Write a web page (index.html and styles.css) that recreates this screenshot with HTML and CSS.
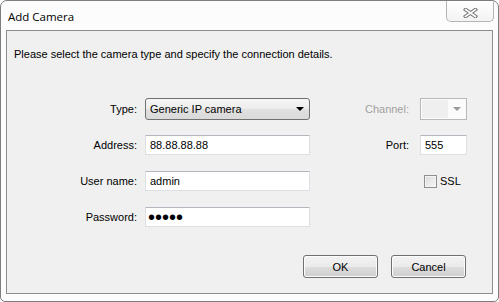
FILE: index.html
```html
<!DOCTYPE html>
<html lang="en">
<head>
  <meta charset="UTF-8" />
  <title>Add Camera</title>
  <link rel="stylesheet" href="styles.css">
</head>
<body>
  <div class="window">
    <div class="titlebar">
      <span class="title">Add Camera</span>
      <div class="close-btn">
        <svg width="15" height="10" viewBox="0 0 15 10">
          <path d="M2.5 1.5 L12.5 8.5 M12.5 1.5 L2.5 8.5" stroke="#767676" stroke-width="3.6" stroke-linecap="square" fill="none"/>
          <path d="M2.5 1.5 L12.5 8.5 M12.5 1.5 L2.5 8.5" stroke="#ffffff" stroke-width="1.6" stroke-linecap="square" fill="none"/>
        </svg>
      </div>
    </div>

    <div class="client">
      <p class="intro">Please select the camera type and specify the connection details.</p>

      <div class="form-grid">
        <label class="lbl">Type:</label>
        <div class="combo">
          <span>Generic IP camera</span>
          <span class="arrow"></span>
        </div>
        <label class="lbl lbl-right disabled">Channel:</label>
        <div class="combo-disabled">
          <span class="combo-fill"></span>
          <span class="arrow arrow-gray"></span>
        </div>

        <label class="lbl">Address:</label>
        <input class="field" type="text" value="88.88.88.88" readonly>
        <label class="lbl lbl-right">Port:</label>
        <input class="field" type="text" value="555" readonly>

        <label class="lbl">User name:</label>
        <input class="field" type="text" value="admin" readonly>
        <span></span>
        <div class="check-row">
          <span class="checkbox"></span>
          <span>SSL</span>
        </div>

        <label class="lbl">Password:</label>
        <input class="field pass" type="password" value="12345" readonly>
      </div>

      <div class="buttons">
        <button class="btn">OK</button>
        <button class="btn">Cancel</button>
      </div>
    </div>
  </div>
</body>
</html>
```

FILE: styles.css
```css
body { margin: 0; background: #fff; font-family: "Liberation Sans", Arial, sans-serif; font-size: 11px; color: #000; }

.window {
  position: relative;
  width: 499px;
  height: 302px;
  box-sizing: border-box;
  border: 1px solid #7d7d7d;
  border-radius: 7px 7px 5px 5px;
  background: #fcfcfc;
}

.titlebar { height: 29px; padding-left: 7px; display: flex; align-items: center; }
.title { font-family: "Open Sans", sans-serif; font-size: 11.5px; color: #000; margin-top: 1px; }

.close-btn {
  position: absolute;
  top: 0;
  right: 4px;
  width: 46px;
  height: 20px;
  border: 1px solid #b5b5b5;
  border-top: none;
  border-radius: 0 0 5px 5px;
  background: linear-gradient(#ffffff, #f3f3f3);
  display: flex;
  align-items: center;
  justify-content: center;
}
.close-btn svg { margin-top: 3px; }

.client {
  margin: 0 5px 0 5px;
  height: 264px;
  box-sizing: border-box;
  border: 1px solid #8c8c8c;
  background: #f0f0f0;
}

.intro { margin: 16px 0 0 7px; line-height: 14px; }

.form-grid {
  margin-top: 30px;
  display: grid;
  grid-template-columns: 130px 165px 94px 47px;
  grid-auto-rows: 36px;
  column-gap: 8px;
  align-items: center;
}

.lbl { text-align: right; }
.lbl-right { padding-right: 3px; }
.disabled { color: #a0a0a0; }

.combo {
  height: 22px;
  box-sizing: border-box;
  border: 1px solid #707070;
  border-radius: 3px;
  background: linear-gradient(#f6f6f6 0%, #ececec 50%, #e0e0e0 51%, #dadada 100%);
  display: flex;
  align-items: center;
  justify-content: space-between;
  padding: 0 5px 0 4px;
}

.arrow {
  width: 0;
  height: 0;
  border-left: 4px solid transparent;
  border-right: 4px solid transparent;
  border-top: 4px solid #000;
}
.arrow-gray { border-top-color: #9a9a9a; margin-right: 4px; }

.combo-disabled {
  height: 22px;
  box-sizing: border-box;
  border: 1px solid #b8b8b8;
  background: #fbfbfb;
  display: flex;
  align-items: center;
  justify-content: space-between;
  padding: 1px;
}
.combo-fill { width: 26px; height: 100%; background: #efefef; }

.field {
  height: 20px;
  box-sizing: border-box;
  margin: 0;
  border: 1px solid #dcdfe4;
  border-top-color: #b3b6bc;
  background: #fff;
  font-family: "Liberation Sans", Arial, sans-serif;
  font-size: 11px;
  color: #000;
  padding: 0 4px;
  outline: none;
}
.pass { font-size: 20px; letter-spacing: 0; padding-left: 2px; }

.check-row { display: flex; align-items: center; gap: 3px; padding-left: 4px; }
.checkbox {
  width: 13px;
  height: 13px;
  box-sizing: border-box;
  border: 1px solid #8f8f8f;
  background: linear-gradient(135deg, #dcdcdc, #f7f7f7);
  box-shadow: inset 0 0 0 1px #f4f4f4;
}

.buttons {
  margin-top: 20px;
  display: flex;
  justify-content: flex-end;
  gap: 13px;
  padding-right: 26px;
}

.btn {
  width: 75px;
  height: 23px;
  box-sizing: border-box;
  border: 1px solid #707070;
  border-radius: 3px;
  background: linear-gradient(#f2f2f2 0%, #ebebeb 50%, #dddddd 51%, #cfcfcf 100%);
  box-shadow: inset 0 0 0 1px #fcfcfc;
  font-family: "Liberation Sans", Arial, sans-serif;
  font-size: 11px;
  color: #000;
  padding: 0;
}
```
